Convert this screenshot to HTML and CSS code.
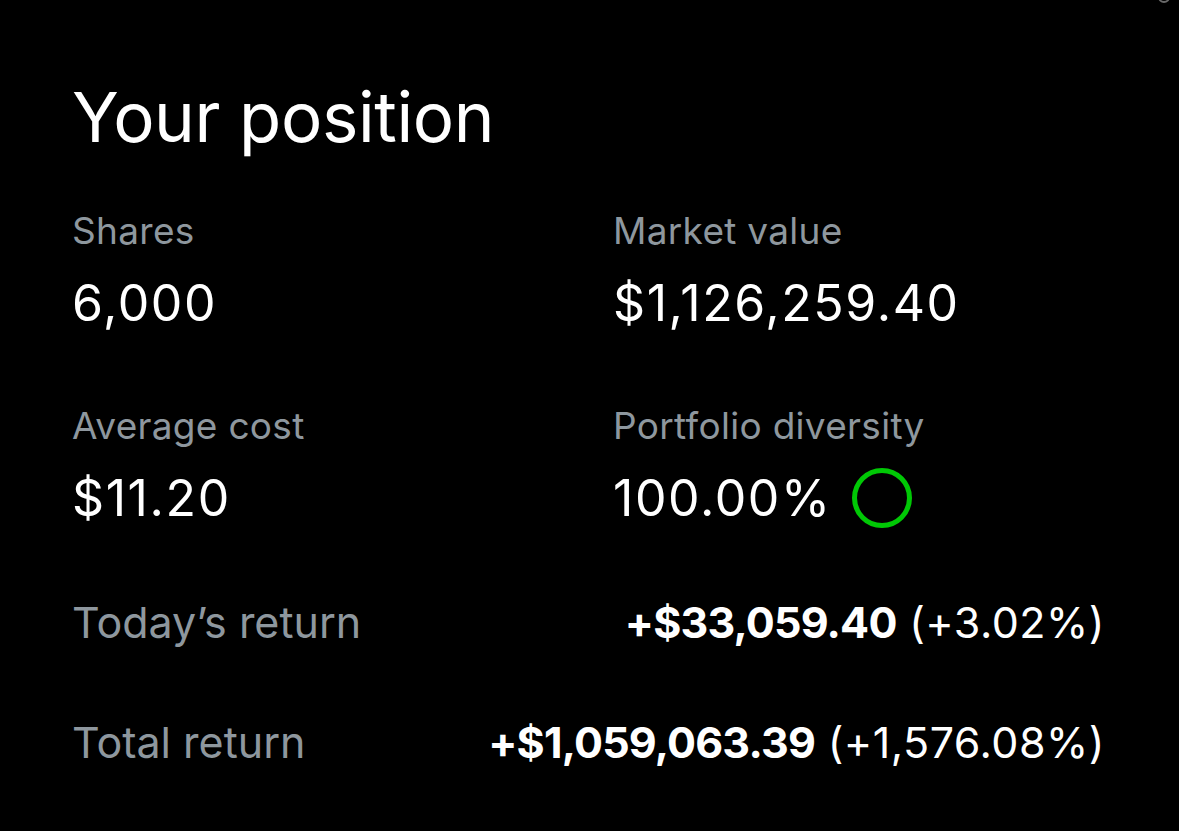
FILE: index.html
```html
<!DOCTYPE html>
<html lang="en">
<head>
<meta charset="utf-8">
<title>Your position</title>
<link rel="stylesheet" href="styles.css">
</head>
<body>
<main class="panel">
  <span class="corner-arc"></span>
  <h1 class="title">Your position</h1>
  <section class="stats">
    <div class="stat">
      <div class="label">Shares</div>
      <div class="value">6,000</div>
    </div>
    <div class="stat">
      <div class="label">Market value</div>
      <div class="value">$1,126,259.40</div>
    </div>
    <div class="stat">
      <div class="label">Average cost</div>
      <div class="value">$11.20</div>
    </div>
    <div class="stat">
      <div class="label">Portfolio diversity</div>
      <div class="value">100.00% <span class="ring"></span></div>
    </div>
  </section>
  <section class="returns">
    <div class="ret-row">
      <span class="ret-label">Today’s return</span>
      <span class="ret-value"><b>+$33,059.40</b> (+3.02%)</span>
    </div>
    <div class="ret-row">
      <span class="ret-label">Total return</span>
      <span class="ret-value"><b>+$1,059,063.39</b> (+1,576.08%)</span>
    </div>
  </section>
</main>
</body>
</html>
```
FILE: styles.css
```css
* { box-sizing: border-box; }
html, body {
  margin: 0;
  background: #000;
  height: 100%;
}
body {
  font-family: Inter, "Liberation Sans", sans-serif;
  color: #fff;
  overflow: hidden;
}
.panel {
  position: relative;
  width: 1179px;
  height: 831px;
  padding: 72px 74px 0 72px;
}
.corner-arc {
  position: absolute;
  top: -9px;
  right: 9px;
  width: 12px;
  height: 12px;
  border: 2px solid #6a6a6a;
  border-radius: 50%;
}
.title {
  margin: 0;
  font-size: 69px;
  font-weight: 400;
  line-height: 90px;
  letter-spacing: -0.4px;
}
.stats {
  display: grid;
  grid-template-columns: 541px 1fr;
  row-gap: 70px;
  margin-top: 46px;
}
.label {
  font-size: 37px;
  line-height: 46px;
  color: #8e979e;
  letter-spacing: 0.3px;
}
.value {
  display: flex;
  align-items: center;
  gap: 20px;
  font-size: 50px;
  line-height: 60px;
  margin-top: 19px;
  letter-spacing: 1.6px;
}
.ring {
  width: 60px;
  height: 60px;
  border: 5px solid #00c805;
  border-radius: 50%;
}
.returns {
  display: flex;
  flex-direction: column;
  gap: 64px;
  margin-top: 66px;
}
.ret-row {
  display: flex;
  justify-content: space-between;
  align-items: baseline;
  font-size: 43px;
  line-height: 56px;
}
.ret-label {
  color: #8e979e;
}
.ret-value {
  letter-spacing: 0.5px;
}
.ret-value b {
  font-weight: 700;
  letter-spacing: -0.8px;
}
```
